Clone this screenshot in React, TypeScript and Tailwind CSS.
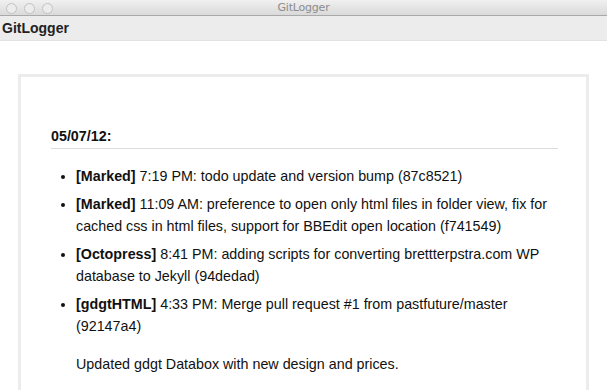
const items = [
  {
    repo: "Marked",
    text: "7:19 PM: todo update and version bump (87c8521)",
  },
  {
    repo: "Marked",
    text: "11:09 AM: preference to open only html files in folder view, fix for cached css in html files, support for BBEdit open location (f741549)",
  },
  {
    repo: "Octopress",
    text: "8:41 PM: adding scripts for converting brettterpstra.com WP database to Jekyll (94dedad)",
  },
  {
    repo: "gdgtHTML",
    text: "4:33 PM: Merge pull request #1 from pastfuture/master (92147a4)",
  },
];

const App: React.FC = () => {
  return (
    <div className="w-[607px] h-[390px] overflow-hidden bg-white font-['Liberation_Sans',Arial,sans-serif]">
      {/* Window title bar */}
      <div className="relative h-[16px] bg-gradient-to-b from-[#f0f0f0] to-[#dadada] border-b border-[#a9a9a9] flex items-center justify-center">
        <div className="absolute left-[6px] top-[3px] flex gap-[7px]">
          <span className="w-[11px] h-[11px] rounded-full border border-[#c2c2c2] bg-[#ececec]"></span>
          <span className="w-[11px] h-[11px] rounded-full border border-[#c2c2c2] bg-[#ececec]"></span>
          <span className="w-[11px] h-[11px] rounded-full border border-[#c2c2c2] bg-[#ececec]"></span>
        </div>
        <span className="text-[11px] leading-none text-[#8c8c8c] font-['DejaVu_Sans',sans-serif] tracking-[-0.2px]">
          GitLogger
        </span>
      </div>

      {/* App header */}
      <div className="h-[25px] bg-[#ececec] border-b border-[#e2e2e2] px-[2px] flex items-center">
        <h1 className="text-[14px] font-bold text-[#222]">GitLogger</h1>
      </div>

      {/* Log card */}
      <div className="mt-[33px] ml-[18px] w-[571px] h-[400px] border-[3px] border-[#ececec] bg-white pt-[49px] pl-[30px] pr-[28px] text-[14.3px] text-[#111]">
        <h2 className="font-bold leading-[20px] pb-[2px] border-b border-[#dcdcdc]">
          05/07/12:
        </h2>
        <ul className="mt-[16px] pl-[25px] list-disc flex flex-col gap-[6px]">
          {items.map((item, i) => (
            <li key={i} className="leading-[22px]">
              <strong>[{item.repo}]</strong> {item.text}
            </li>
          ))}
        </ul>
        <p className="mt-[16px] pl-[25px] leading-[22px]">
          Updated gdgt Databox with new design and prices.
        </p>
      </div>
    </div>
  );
};

export default App;
